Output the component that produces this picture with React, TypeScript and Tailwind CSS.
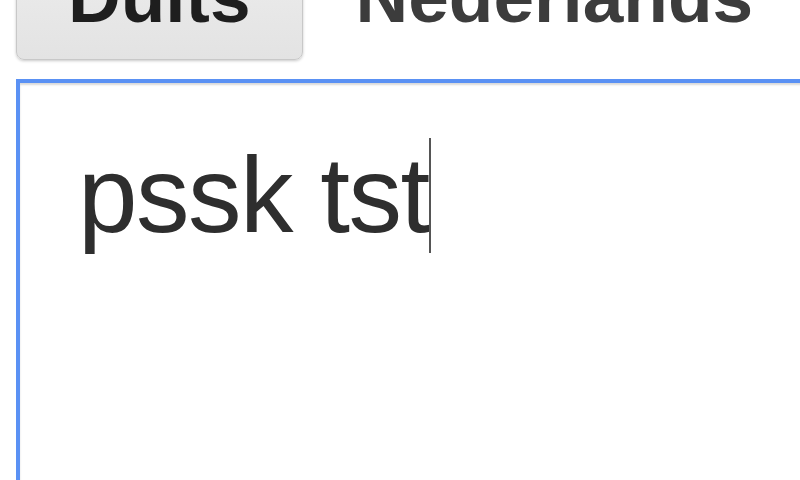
export default function App() {
  return (
    <div className="w-[800px] h-[480px] overflow-hidden bg-white px-4 font-['Liberation_Sans',Arial,sans-serif]">
      {/* Language tabs, cut off at the top */}
      <div className="flex h-[60px] items-end">
        <button className="h-[110px] shrink-0 flex items-end px-[51px] pb-[26px] bg-[linear-gradient(#ededed,#e3e3e3)] border border-[#c8c8c8] rounded-[8px] shadow-[0_1px_3px_rgba(0,0,0,0.22)] text-[73px] leading-none font-bold text-[#1e1e1e]">
          Duits
        </button>
        <button className="h-[110px] shrink-0 flex items-end px-[52px] pb-[26px] border border-transparent text-[73px] leading-none font-bold text-[#3c3c3c]">
          Nederlands
        </button>
      </div>

      {/* Focused input */}
      <div className="mt-[19px] w-[820px] h-[500px] border-4 border-[#5a91f4] shadow-[inset_0_2px_2px_rgba(0,0,0,0.15)] pl-[58px] pt-[55px]">
        <div className="text-[107px] leading-none tracking-[-1.5px] text-[#2e2e2e] whitespace-pre">
          pssk tst
          <span className="inline-block w-[2px] h-[115px] bg-[#555] align-[-21px]" />
        </div>
      </div>
    </div>
  );
}
